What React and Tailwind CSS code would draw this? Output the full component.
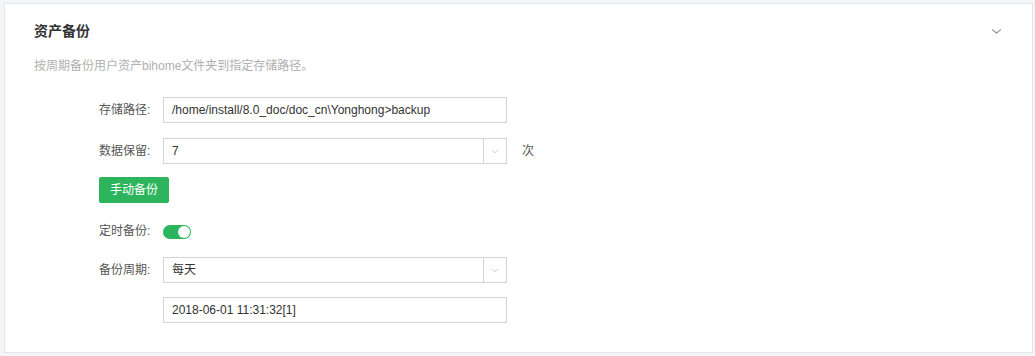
import React from "react";

const Chevron = ({ className }) => (
  <svg viewBox="0 0 12 8" className={className} fill="none" stroke="currentColor" strokeWidth="1.3">
    <path d="M1 1.5 L6 6 L11 1.5" />
  </svg>
);

const Label = ({ children }) => (
  <div className="w-[64px] shrink-0 text-[12px] text-[#555]">{children}</div>
);

const TextBox = ({ value }) => (
  <div className="flex h-[26px] w-[344px] items-center border border-[#d4d4d4] bg-white px-[8px] text-[12px] text-[#333]">
    {value}
  </div>
);

const SelectBox = ({ value }) => (
  <div className="flex h-[26px] w-[344px] items-stretch border border-[#d4d4d4] bg-white text-[12px] text-[#333]">
    <div className="flex flex-1 items-center px-[8px]">{value}</div>
    <div className="flex w-[23px] items-center justify-center border-l border-[#d4d4d4] text-[#c8c8c8]">
      <Chevron className="h-[5px] w-[8px]" />
    </div>
  </div>
);

export default function App() {
  return (
    <div
      className="min-h-[356px] bg-[#f4f5f7] pl-[4px] pt-[3px]"
      style={{ fontFamily: '"Liberation Sans", "Noto Sans CJK SC", sans-serif' }}
    >
      <div className="h-[350px] w-[1029px] border border-[#e3e5e8] bg-white px-[29px] pt-[17px]">
        <div className="flex h-[20px] items-center justify-between">
          <h2 className="text-[14px] font-bold text-[#333]">资产备份</h2>
          <Chevron className="mr-[1px] h-[7px] w-[11px] text-[#8a93a6]" />
        </div>
        <p className="mt-[16px] text-[12px] leading-[18px] text-[#b0b0b0]">
          按周期备份用户资产bihome文件夹到指定存储路径。
        </p>

        <div className="pl-[65px]">
          <div className="mt-[22px] flex items-center">
            <Label>存储路径:</Label>
            <TextBox value="/home/install/8.0_doc/doc_cn\Yonghong>backup" />
          </div>

          <div className="mt-[15px] flex items-center">
            <Label>数据保留:</Label>
            <SelectBox value="7" />
            <span className="ml-[15px] text-[12px] text-[#555]">次</span>
          </div>

          <button
            type="button"
            className="mt-[13px] flex h-[26px] w-[70px] items-center justify-center rounded-[2px] bg-[#2db55d] text-[12px] text-white"
          >
            手动备份
          </button>

          <div className="mt-[15px] flex h-[26px] items-center">
            <Label>定时备份:</Label>
            <div className="mt-[2px] flex h-[14px] w-[28px] items-center justify-end rounded-full bg-[#2db55d] pr-[1px]">
              <div className="h-[12px] w-[12px] rounded-full bg-white" />
            </div>
          </div>

          <div className="mt-[13px] flex items-center">
            <Label>备份周期:</Label>
            <SelectBox value="每天" />
          </div>

          <div className="mt-[14px] flex items-center">
            <div className="w-[64px] shrink-0" />
            <TextBox value="2018-06-01 11:31:32[1]" />
          </div>
        </div>
      </div>
    </div>
  );
}
